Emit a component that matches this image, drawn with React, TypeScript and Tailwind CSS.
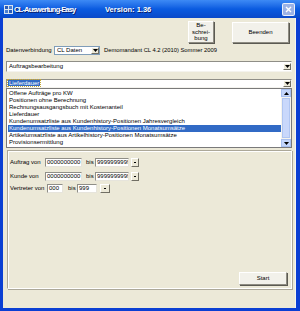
import React from "react";

const items = [
  "Offene Aufträge pro KW",
  "Positionen ohne Berechnung",
  "Rechnungsausgangsbuch mit Kostenanteil",
  "Lieferdauer",
  "Kundenumsatzliste aus Kundenhistory-Positionen Jahresvergleich",
  "Kundenumsatzliste aus Kundenhistory-Positionen Monatsumsätze",
  "Artikelumsatzliste aus Artikelhistory-Positionen Monatsumsätze",
  "Provisionsermittlung",
];

function Arrow({ up = false }: { up?: boolean }) {
  return (
    <svg width="5" height="3" viewBox="0 0 5 3">
      {up ? <path d="M0 3 L2.5 0 L5 3 Z" fill="#000" /> : <path d="M0 0 L5 0 L2.5 3 Z" fill="#000" />}
    </svg>
  );
}

function DropBtn() {
  return (
    <div className="w-[8px] h-[7px] flex items-center justify-center bg-[#ece9d8] border border-t-white border-l-white border-r-[#716f64] border-b-[#716f64]">
      <Arrow />
    </div>
  );
}

function Btn({ children, className }: { children: React.ReactNode; className: string }) {
  return (
    <div className={"flex items-center justify-center text-center bg-[#f2f1ea] border border-t-white border-l-white border-r-[#8e8c82] border-b-[#8e8c82] shadow-[1px_1px_0_#5b5a52] " + className}>
      {children}
    </div>
  );
}

function Field({ value, w }: { value: string; w: string }) {
  return (
    <div className={"h-[9px] bg-white border border-t-[#8f8e87] border-l-[#8f8e87] border-b-[#e6e4dc] border-r-[#e6e4dc] overflow-hidden whitespace-nowrap leading-[7px] pl-[1px] " + w}>
      {value}
    </div>
  );
}

function Dots({ className = "" }: { className?: string }) {
  return (
    <div className={"h-[9px] w-[8px] flex items-center justify-center bg-[#ece9d8] border border-t-white border-l-white border-r-[#716f64] border-b-[#716f64] " + className}>
      <div className="w-[2px] h-[1px] bg-black" />
    </div>
  );
}

export default function App() {
  return (
    <div className="w-[300px] h-[311px] bg-[#0b3fd3] flex flex-col text-[6px] leading-[7px] text-black font-['Liberation_Sans',Arial,sans-serif]">
      {/* title bar */}
      <div className="h-[18px] flex items-center bg-gradient-to-b from-[#3d8af5] via-[#0a5be0] to-[#0a49c9] pl-[4px] pr-[5px]">
        <svg width="9" height="9" viewBox="0 0 9 9" className="mr-[0px] shrink-0">
          <rect x="0" y="0" width="9" height="9" fill="#d8e4f0" />
          <rect x="1" y="1" width="3" height="3" fill="#2a5cb8" />
          <rect x="5" y="1" width="3" height="3" fill="#4c7fd0" />
          <rect x="1" y="5" width="3" height="3" fill="#4c7fd0" />
          <rect x="5" y="5" width="3" height="3" fill="#2a5cb8" />
        </svg>
        <span className="shrink-0 pl-[1px] w-[92px] whitespace-nowrap text-white font-bold text-[7.5px] tracking-[-0.8px] [text-shadow:1px_1px_0_#0a1e6a]">CL-Auswertung-Easy</span>
        <span className="shrink-0 whitespace-nowrap text-white font-bold text-[7.5px] [text-shadow:1px_1px_0_#0a1e6a]">Version: 1.36</span>
        <div className="ml-auto w-[13px] h-[13px] rounded-[2px] border border-white/80 bg-[#9bb2e6] flex items-center justify-center">
          <svg width="7" height="7" viewBox="0 0 7 7">
            <path d="M1 1 L6 6 M6 1 L1 6" stroke="#fff" strokeWidth="1.4" />
          </svg>
        </div>
      </div>
      {/* body */}
      <div className="flex-1 flex pl-[3px] pr-[4px] pb-[3px]">
        <div className="flex-1 bg-[#ece9d8] flex flex-col border-r border-r-[#f6f5ef]">
          {/* top buttons */}
          <div className="flex justify-end pt-[3px] pr-[6px] gap-[18px]">
            <Btn className="w-[26px] h-[22px] leading-[6.5px] text-[6px]">Be-<br />schrei-<br />bung</Btn>
            <Btn className="w-[57px] h-[21px] mt-[1px]">Beenden</Btn>
          </div>
          {/* Datenverbindung row */}
          <div className="flex items-center mt-[3px] pl-[3px] h-[9px]">
            <span className="w-[48px]">Datenverbindung</span>
            <div className="w-[46px] h-[9px] bg-white border border-[#7f9db9] flex items-center pl-[2px]">
              <span className="flex-1">CL Daten</span>
              <DropBtn />
            </div>
            <span className="ml-[4px] text-[5.8px]">Demomandant CL 4.2 (2010) Sommer 2009</span>
          </div>
          {/* combo 1 */}
          <div className="mt-[6px] ml-[3px] mr-[3px] h-[11px] bg-white border border-t-[#8f8e87] border-l-[#8f8e87] border-b-[#f4f3ee] border-r-[#f4f3ee] flex items-center pl-[2px]">
            <span className="flex-1">Auftragsbearbeitung</span>
            <DropBtn />
          </div>
          {/* combo 2 */}
          <div className="mt-[7px] ml-[3px] mr-[3px] h-[9px] bg-white border border-t-[#8f8e87] border-l-[#8f8e87] border-b-[#f4f3ee] border-r-[#f4f3ee] flex items-center pl-[1px]">
            <span className="flex-1"><span className="bg-[#316ac5] text-white px-[1px] outline outline-1 outline-dotted outline-[#c5a832]">Lieferdauer</span></span>
            <DropBtn />
          </div>
          {/* list */}
          <div className="ml-[3px] mr-[3px] h-[60px] bg-white border border-[#7a7a7a] flex">
            <div className="flex-1 flex flex-col pl-[1px] pt-[1px] overflow-hidden whitespace-nowrap">
              {items.map((t, i) => (
                <div key={t} className={"h-[7px] leading-[7px] pl-[1px] " + (i === 5 ? "bg-[#316ac5] text-white" : "")}>{t}</div>
              ))}
            </div>
            <div className="w-[10px] flex flex-col bg-[#f5f4ee]">
              <div className="h-[8px] bg-[#c4d6fb] border border-[#a8c0f0] flex items-center justify-center"><Arrow up /></div>
              <div className="flex-1 mx-[1px] my-[1px] bg-[#c9d8fb] border border-[#b0c6f2]" />
              <div className="h-[8px] bg-[#c4d6fb] border border-[#a8c0f0] flex items-center justify-center"><Arrow /></div>
            </div>
          </div>
          {/* frame */}
          <div className="flex-1 mt-[2px] ml-[4px] mr-[3px] mb-[19px] border border-t-[#aca899] border-l-[#aca899] border-r-white border-b-white shadow-[inset_1px_1px_0_white,1px_1px_0_#aca899] flex flex-col pl-[2px] pt-[7px] pr-[4px] pb-[3px]">
            <div className="flex items-center h-[9px]">
              <span className="w-[35px]">Auftrag von</span>
              <Field value="0000000000" w="w-[37px]" />
              <span className="ml-[4px] w-[9px]">bis</span>
              <Field value="9999999999" w="w-[34px]" />
              <Dots className="ml-[2px]" />
            </div>
            <div className="flex items-center h-[9px] mt-[5px]">
              <span className="w-[35px]">Kunde von</span>
              <Field value="0000000000" w="w-[37px]" />
              <span className="ml-[4px] w-[9px]">bis</span>
              <Field value="9999999999" w="w-[34px]" />
              <Dots className="ml-[2px]" />
            </div>
            <div className="flex items-center h-[9px] mt-[3px]">
              <span className="w-[37px]">Vertreter von</span>
              <Field value="000" w="w-[16px]" />
              <span className="ml-[5px] w-[9px]">bis</span>
              <Field value="999" w="w-[20px]" />
              <Dots className="ml-[3px] w-[10px]" />
            </div>
            <div className="mt-auto flex justify-end">
              <Btn className="w-[48px] h-[13px]">Start</Btn>
            </div>
          </div>
        </div>
      </div>
    </div>
  );
}
